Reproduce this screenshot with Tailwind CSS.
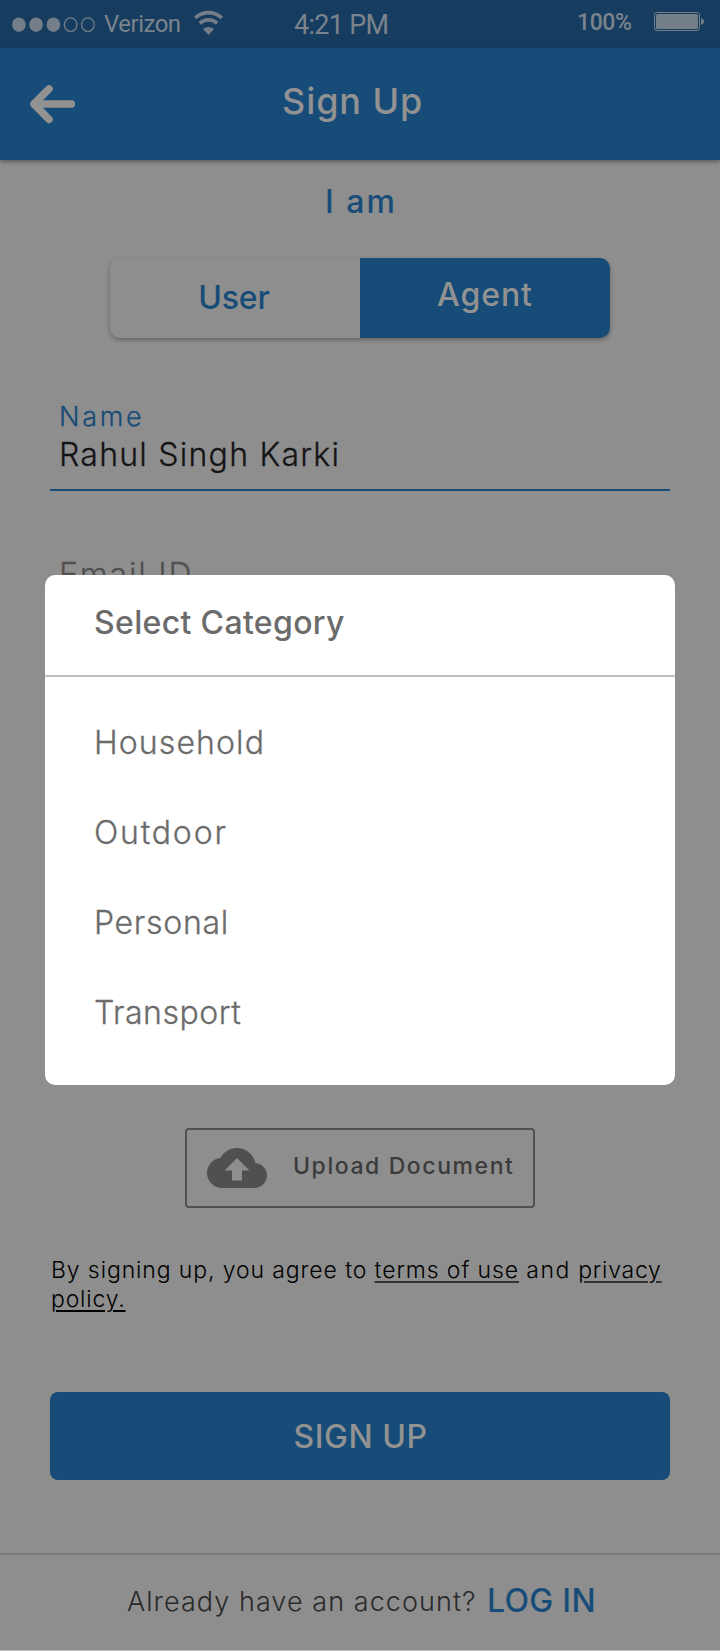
<!DOCTYPE html>
<html lang="en">
<head>
<meta charset="utf-8">
<title>Sign Up</title>
<script src="https://cdn.jsdelivr.net/npm/@tailwindcss/browser@4"></script>
</head>
<body class="bg-[#8e8e8e]">
<div class="relative flex h-[1651px] w-[720px] flex-col overflow-hidden bg-[#8e8e8e] font-['Inter',sans-serif] font-light leading-none">

  <!-- Status bar -->
  <div class="flex h-12 shrink-0 items-start bg-[#163c5f] font-['Roboto',sans-serif] font-normal text-[#7b838d]">
    <svg class="ml-3 mt-[17px] h-4 w-[84px] shrink-0" viewBox="0 0 84 16" fill="#737e88">
      <ellipse cx="6.9" cy="7.7" rx="6.8" ry="7.3"/><ellipse cx="24.1" cy="7.7" rx="6.8" ry="7.3"/><ellipse cx="41.4" cy="7.7" rx="6.8" ry="7.3"/>
      <g fill="none" stroke="#737e88" stroke-width="1.2"><ellipse cx="58.6" cy="7.7" rx="6.3" ry="6.8"/><ellipse cx="75.9" cy="7.7" rx="6.3" ry="6.8"/></g>
    </svg>
    <span class="ml-[8px] mt-3 w-[76px] shrink-0 whitespace-nowrap text-[24px] tracking-[-0.5px]">Verizon</span>
    <svg class="ml-[13px] mt-[10px] h-[26px] w-8 shrink-0" viewBox="0 0 32 26" fill="#737e88">
      <path d="M1 6.500C9.500-1.200 21.500-1.200 30 6.500L27.500 9.200C20.500 3 10.500 3 3.500 9.200z"/>
      <path d="M5.500 12c5.600-5.200 14.400-5.200 20 0l-2.500 2.700c-4.400-3.900-10.600-3.900-15 0z"/>
      <path d="M10 19c3.200-2.800 7.800-2.800 11 0l-5.500 6z"/>
    </svg>
    <span class="ml-[69px] mt-3 w-[95px] shrink-0 whitespace-nowrap text-[27px] tracking-[-0.7px]">4:21 PM</span>
    <span class="ml-[188px] mt-[11px] w-[55px] shrink-0 whitespace-nowrap text-[23px] font-medium tracking-[-0.4px]">100%</span>
    <svg class="ml-[22px] mt-3 h-[19px] w-[51px] shrink-0" viewBox="0 0 51 19">
      <rect x=".5" y=".5" width="45" height="18" rx="2.500" fill="none" stroke="#737e88"/>
      <rect x="2" y="2" width="42" height="15" rx="1.500" fill="#737e88"/>
      <path d="M47 6.300c4 .7 4 5.700 0 6.400z" fill="#737e88"/>
    </svg>
  </div>

  <!-- App bar -->
  <header class="flex h-28 shrink-0 items-start bg-[#174c78] pl-[30px] text-[#929292] shadow-[0_2px_4px_rgba(0,0,0,0.35)]">
    <svg class="mt-[37px] h-[39px] w-[45px] shrink-0" viewBox="0 0 45 39" fill="none" stroke="#929292" stroke-width="7.500" stroke-linecap="round" stroke-linejoin="round">
      <path d="M19 3.900 3.900 19 19 34.400"/><path d="M6 19h35.300"/>
    </svg>
    <h1 class="ml-[207px] mt-[35px] whitespace-nowrap text-[36px] font-medium tracking-[0.9px]">Sign Up</h1>
  </header>

  <main class="flex flex-col">
    <p class="mt-[26px] pl-[2px] text-center text-[32px] font-medium tracking-[2px] text-[#174c78]">I am</p>

    <div class="mx-[110px] mt-10 flex h-20 overflow-hidden rounded-[10px] text-center text-[32px] font-medium shadow-[0_2px_4px_rgba(0,0,0,0.3)]">
      <div class="w-1/2 bg-[#8e8e8e] pr-[2px] pt-6 tracking-[-0.1px] text-[#174c78]">User</div>
      <div class="w-1/2 bg-[#174c78] pt-[21px] tracking-[0.92px] text-[#929292]">Agent</div>
    </div>

    <div class="mx-[50px] mt-[65px] border-b-2 border-[#174c78] pb-[18px] pl-[9px]">
      <div class="text-[27px] tracking-[2.700px] text-[#174c78] [-webkit-text-stroke:0.3px]">Name</div>
      <div class="mt-[9px] text-[32px] tracking-[1.25px] text-[#141414] [-webkit-text-stroke:0.3px]">Rahul Singh Karki</div>
    </div>
    <div class="mx-[50px] mt-[68px] pl-[9px] text-[32px] tracking-[1.8px] text-[#505050] [-webkit-text-stroke:0.3px]">Email ID</div>

    <button class="mx-auto mt-[537px] flex h-20 w-[350px] items-start rounded-[4px] border-2 border-[#505050] pl-5 pt-[18px] text-[#3b3b3b]">
      <svg class="h-10 w-[60px] shrink-0" viewBox="0 4 24 16" fill="#505050" preserveAspectRatio="none"><path d="M19.350 10.040C18.670 6.590 15.640 4 12 4 9.110 4 6.600 5.640 5.350 8.040 2.340 8.360 0 10.910 0 14c0 3.310 2.690 6 6 6h13c2.760 0 5-2.240 5-5 0-2.640-2.050-4.780-4.650-4.960zM14 13v4h-4v-4H7l5-5 5 5h-3z"/></svg>
      <span class="ml-[26px] mt-[7px] whitespace-nowrap text-[23px] font-medium leading-none tracking-[1.58px]">Upload Document</span>
    </button>

    <p class="ml-[51px] mt-12 whitespace-nowrap text-[23px] leading-[29px] tracking-[0.89px] text-black">By signing up, you agree to <span class="underline decoration-[#333] decoration-[1.5px] underline-offset-[3px]">terms of use</span> <span class="tracking-[1.500px]">and</span> <span class="tracking-[0.75px] underline decoration-[#333] decoration-[1.5px] underline-offset-[3px]">privacy</span><br><span class="tracking-[0.800px] underline decoration-black decoration-[1.5px] underline-offset-[3px]">policy.</span></p>

    <button class="mx-[50px] mt-[78px] h-[88px] rounded-[8px] bg-[#174c78] pl-px pt-0.5 text-[32px] font-medium leading-none tracking-[0.54px] text-[#929292]">SIGN UP</button>
  </main>

  <footer class="mt-[73px] flex h-[98px] shrink-0 items-start border-b border-t-2 border-b-[#c0c0c0] border-t-[#7b7b7b]">
    <span class="ml-[127px] mt-[33px] w-[360px] whitespace-nowrap text-[27px] tracking-[1.06px] text-[#2a2a2a]">Already have an account?</span>
    <a class="mt-[30px] whitespace-nowrap text-[32px] font-medium tracking-[0.3px] text-[#174c78]">LOG IN</a>
  </footer>

  <!-- Category dialog -->
  <section class="absolute left-[45px] top-[575px] flex h-[510px] w-[630px] flex-col rounded-[10px] bg-white text-[32px] text-[#6b6b6b]">
    <h2 class="h-[102px] shrink-0 border-b-2 border-[#c0c0c0] pl-[49px] pt-8 font-medium tracking-[0.34px]">Select Category</h2>
    <ul class="flex flex-col gap-[58px] pl-[49px] pt-[50px] [-webkit-text-stroke:0.3px]">
      <li class="tracking-[1.1px]">Household</li>
      <li class="tracking-[1.8px]">Outdoor</li>
      <li class="tracking-[0.7px]">Personal</li>
      <li class="tracking-[0.5px]">Transport</li>
    </ul>
  </section>
</div>
</body>
</html>
